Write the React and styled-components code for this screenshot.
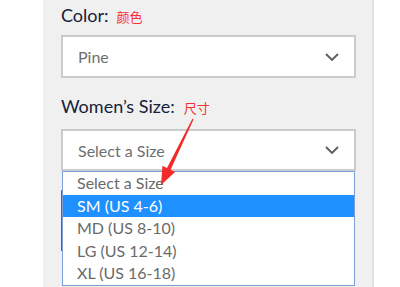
import React from 'react';
import styled, { createGlobalStyle } from 'styled-components';

const GlobalStyle = createGlobalStyle`
    html, body {
        margin: 0;
        padding: 0;
        background: #ffffff;
        overflow: hidden;
    }
    body {
        font-family: Lato, "Noto Sans", "Noto Sans CJK SC", sans-serif;
    }
`;

const Page = styled.div`
    position: relative;
    display: flex;
    width: 400px;
    height: 287px;
    overflow: hidden;
`;

const Gutter = styled.div`
    width: 43px;
    background: #ffffff;
`;

const Panel = styled.div`
    width: 331px;
    background: #f0f0f0;
    border-right: 2px solid #e2e2e2;
    padding: 2px 18px 0 18px;
    box-sizing: border-box;
`;

const Label = styled.div`
    display: flex;
    align-items: baseline;
    font-size: 18px;
    line-height: 26px;
    color: #14223a;
    margin: ${(props) => props.margin || '0'};
`;

const Note = styled.span`
    font-family: "Noto Sans CJK SC", sans-serif;
    font-size: 13px;
    color: #f5302f;
    margin-left: ${(props) => props.gap || 8}px;
`;

const Field = styled.div`
    position: relative;
    width: 295px;
`;

const SelectBox = styled.div`
    display: flex;
    align-items: center;
    justify-content: space-between;
    height: ${(props) => props.h}px;
    box-sizing: border-box;
    background: #ffffff;
    border: 2px solid #cbcbcb;
    padding: 0 15px 0 15px;
    font-size: 16px;
    color: #6f6f6f;
`;

const Menu = styled.ul`
    position: absolute;
    top: 100%;
    left: 1px;
    right: 1px;
    margin: 0;
    padding: 0;
    list-style: none;
    background: #ffffff;
    border: 1px solid #7b9fd9;
    z-index: 2;
`;

const Option = styled.li`
    height: 22.6px;
    line-height: 22.6px;
    padding-left: 14px;
    font-size: 16px;
    color: ${(props) => (props.active ? '#ffffff' : '#6a6a6a')};
    background: ${(props) => (props.active ? '#1e90ff' : 'transparent')};
`;

const BagButton = styled.div`
    margin-top: 19px;
    height: 61px;
    box-sizing: border-box;
    border: 1px solid #a24a4a;
    background: #ffffff;
`;

const Extra = styled.div`
    margin-top: 34px;
    padding-left: 57px;
    font-size: 14px;
    letter-spacing: 2px;
    color: #2a2a2a;
`;

const Overlay = styled.svg`
    position: absolute;
    left: 0;
    top: 0;
    pointer-events: none;
    z-index: 3;
`;

function Chevron() {
    return (
        <svg width="14" height="8" viewBox="0 0 14 8">
            <path d="M1 1 L7 7 L13 1" fill="none" stroke="#5a5a5a" strokeWidth="1.8" />
        </svg>
    );
}

const sizes = ['Select a Size', 'SM (US 4-6)', 'MD (US 8-10)', 'LG (US 12-14)', 'XL (US 16-18)'];

function App() {
    return (
        <Page>
            <GlobalStyle />
            <Gutter />
            <Panel>
                <Label margin="0 0 5px 0">
                    Color:<Note>颜色</Note>
                </Label>
                <Field>
                    <SelectBox h={43}>
                        <span>Pine</span>
                        <Chevron />
                    </SelectBox>
                </Field>
                <Label margin="15px 0 8px 0">
                    Women’s Size:<Note gap={9}>尺寸</Note>
                </Label>
                <Field>
                    <SelectBox h={42}>
                        <span>Select a Size</span>
                        <Chevron />
                    </SelectBox>
                    <Menu>
                        {sizes.map((s, i) => (
                            <Option key={s} active={i === 1}>
                                {s}
                            </Option>
                        ))}
                    </Menu>
                </Field>
                <BagButton />
                <Extra>ADD TO WISHLIST</Extra>
            </Panel>
            <Overlay width="400" height="287" viewBox="0 0 400 287">
                <polygon
                    points="192.4,118.7 193.6,119.3 170.6,169.7 175.1,171.9 161,185 162.5,165.7 167,167.9"
                    fill="#f22a2a"
                />
            </Overlay>
        </Page>
    );
}

export default App;
